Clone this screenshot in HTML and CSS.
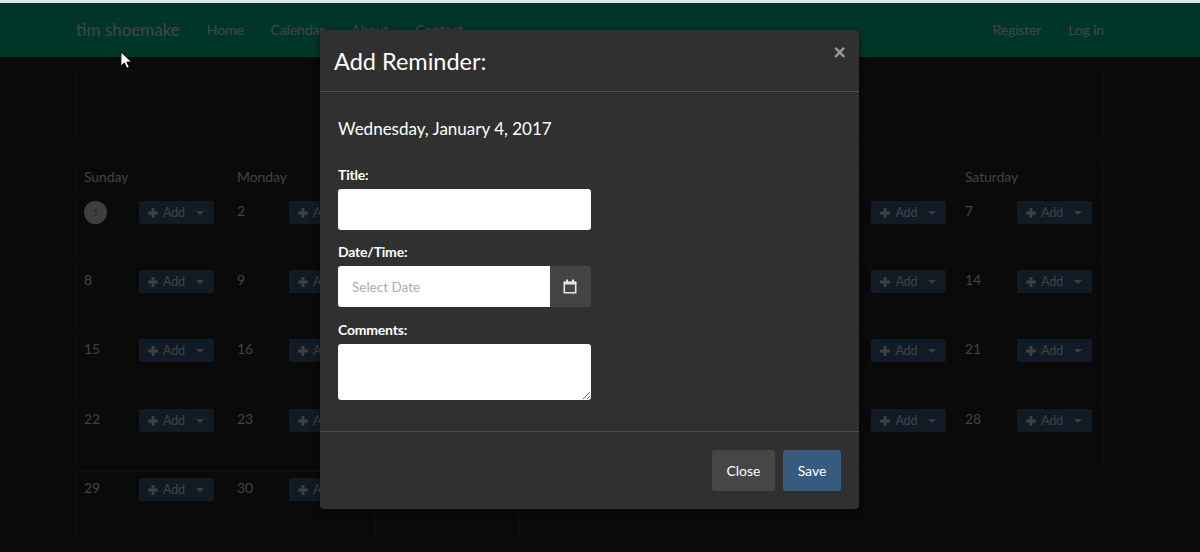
FILE: index.html
```html
<!DOCTYPE html>
<html lang="en">
<head>
<meta charset="utf-8">
<title>Calendar</title>
<link rel="stylesheet" href="styles.css">
</head>
<body>
<header class="navbar">
  <nav class="nav-inner">
    <a class="brand">tim shoemake</a>
    <a class="nav-link">Home</a>
    <a class="nav-link">Calendar</a>
    <a class="nav-link">About</a>
    <a class="nav-link">Contact</a>
    <span class="nav-spacer"></span>
    <a class="nav-link">Register</a>
    <a class="nav-link">Log in</a>
  </nav>
</header>
<main class="container">
  <div class="well"></div>
  <div class="calendar" id="calendar">
    <div class="cell head">Sunday</div><div class="cell head">Monday</div><div class="cell head">Tuesday</div><div class="cell head">Wednesday</div><div class="cell head">Thursday</div><div class="cell head">Friday</div><div class="cell head">Saturday</div>
  </div>
</main>
<div class="backdrop"></div>
<div class="topline"></div>
<section class="modal">
  <div class="modal-header">
    <h4 class="modal-title">Add Reminder:</h4>
    <span class="close">&times;</span>
  </div>
  <div class="modal-body">
    <h5 class="day">Wednesday, January 4, 2017</h5>
    <label class="label">Title:</label>
    <input class="control" type="text">
    <label class="label">Date/Time:</label>
    <div class="input-group">
      <input class="control group-input" type="text" placeholder="Select Date">
      <span class="addon">
        <svg width="14" height="15" viewBox="0 0 14 15"><path fill="none" stroke="#e6e2e6" stroke-width="1.6" d="M1.3 3.6h11.4v10.1H1.3z"/><path fill="#e6e2e6" d="M.8 2.6h12.4v3H.8zM3 .6h2v3H3zM9 .6h2v3H9z"/></svg>
      </span>
    </div>
    <label class="label">Comments:</label>
    <textarea class="control area"></textarea>
  </div>
  <div class="modal-footer">
    <button class="btn btn-default">Close</button>
    <button class="btn btn-primary">Save</button>
  </div>
</section>
<svg class="cursor" width="13" height="19" viewBox="0 0 13 19"><path fill="#fff" stroke="#000" stroke-width=".8" d="M1 1v14l3.4-3.2 2.4 5.4 2.4-1-2.4-5.2h4.7z"/></svg>
<script src="calendar.js"></script>
</body>
</html>
```
FILE: calendar.js
```js
var cal = document.getElementById('calendar');
for (var d = 1; d <= 31; d++) {
  var cell = document.createElement('div');
  cell.className = 'cell day-cell' + ((d - 1) % 7 === 0 ? ' first' : '');
  var num = d === 1 ? '<span class="date"><span class="today">1</span></span>' : '<span class="date">' + d + '</span>';
  cell.innerHTML = num +
    '<span class="add"><svg class="plus" width="10" height="10" viewBox="0 0 10 10"><path fill="currentColor" d="M3.6 0h2.8v3.6H10v2.8H6.4V10H3.6V6.4H0V3.6h3.6z"/></svg>Add<i class="caret"></i></span>';
  cal.appendChild(cell);
}
```
FILE: styles.css
```css
* { box-sizing: border-box; }
html, body { margin: 0; height: 552px; overflow: hidden; }
body {
  background: #222;
  color: #fff;
  font-family: Lato, "Liberation Sans", sans-serif;
  font-size: 14px;
  line-height: 20px;
  padding-top: 3px;
}
.topline { position: absolute; left: 0; top: 0; width: 100%; height: 3px; background: #dfe5e5; }
.navbar { height: 54px; background: #00b488; color: #e4e4e4; }
.nav-inner { display: flex; align-items: center; height: 54px; padding: 0 96px 0 76px; }
.brand { font-size: 17px; margin-right: 27px; }
.nav-link { margin-right: 27px; letter-spacing: -.15px; }
.nav-link:last-child { margin-right: 0; }
.nav-spacer { flex: 1; }
.container { width: 1028px; margin-left: 76px; padding-top: 13px; }
.well { height: 71px; border: 1px solid #343434; }
.calendar {
  display: grid;
  grid-template-columns: 153px repeat(5, 145.6px) 147px;
  grid-template-rows: 34px 69px 69px 70px 69px 70px;
  margin-top: 19px;
  color: #dcdcdc;
}
.cell {
  border-top: 1px solid #343434;
  border-left: 1px solid #343434;
  padding: 6px 7px;
  font-size: 14px;
  letter-spacing: -.1px;
}
.cell:nth-child(7n) { border-right: 1px solid #343434; }
.cell:nth-child(n+36) { border-bottom: 1px solid #343434; }
.cell:nth-child(38) { border-right: 1px solid #343434; }
.cell:nth-child(n+29):nth-child(-n+35) { border-bottom: 1px solid #343434; }
.day-cell { display: flex; align-items: flex-start; }
.date { width: 52px; flex: none; }
.first .date { width: 55px; }
.today {
  display: block; width: 23px; height: 23px; border-radius: 50%;
  background: #cfcfcf; color: #888; font-size: 9px; line-height: 23px; text-align: center;
}
.add {
  display: flex; align-items: center; flex: none;
  width: 75px; height: 23px; padding-left: 9px;
  background: #375a7f; border-radius: 2px; font-size: 12.5px; color: #d8d8d8;
}
.plus { margin-right: 5px; }
.caret {
  margin-left: 11px; width: 0; height: 0;
  border-left: 4px solid transparent; border-right: 4px solid transparent; border-top: 4px solid #ccc;
}
.backdrop { position: absolute; inset: 0; background: rgba(0,0,0,.7); }
.modal {
  position: absolute; left: 320px; top: 30px; width: 539px; height: 479px;
  background: #303030; border-radius: 4px;
  box-shadow: 0 3px 9px rgba(0,0,0,.5);
}
.modal-header { position: relative; height: 62px; border-bottom: 1px solid #4e4e4e; padding: 15px 14px 0; }
.modal-title { margin: 0; font-size: 23.5px; line-height: 32px; font-weight: 400; }
.close { position: absolute; right: 13px; top: 9px; font-size: 22px; line-height: 26px; font-weight: 900; color: #9a9a9a; }
.modal-body { height: 340px; border-bottom: 1px solid #4e4e4e; padding: 25px 18px 0; }
.day { margin: 0 0 24px; font-size: 17px; line-height: 24px; font-weight: 400; }
.label { display: block; font-weight: 700; font-size: 14px; line-height: 20px; height: 24px; letter-spacing: -.2px; }
.control {
  display: block; width: 252.5px; height: 41px; border: 0; padding: 0 14px; margin: 0 0 12px;
  background: #fff; border-radius: 3px; font: 13.5px Lato, "Liberation Sans", sans-serif; color: #333;
}
.control::placeholder { color: #acacac; opacity: 1; }
.input-group { display: flex; width: 252.5px; margin-bottom: 13px; }
.group-input { width: 212px; margin: 0; border-radius: 3px 0 0 3px; }
.addon {
  flex: 1; display: flex; align-items: center; justify-content: center;
  background: #444; border-radius: 0 3px 3px 0;
}
.area { height: 56px; padding: 10px 14px; resize: vertical; }
.modal-footer { display: flex; justify-content: flex-end; gap: 8px; padding: 18px 18px 0; }
.btn {
  height: 41px; border: 0; border-radius: 3px; color: #fff; font: 14px Lato, "Liberation Sans", sans-serif; padding: 0;
}
.btn-default { width: 63px; background: #464646; }
.btn-primary { width: 58px; background: #375a7f; }
.cursor { position: absolute; left: 120px; top: 51px; }
```
